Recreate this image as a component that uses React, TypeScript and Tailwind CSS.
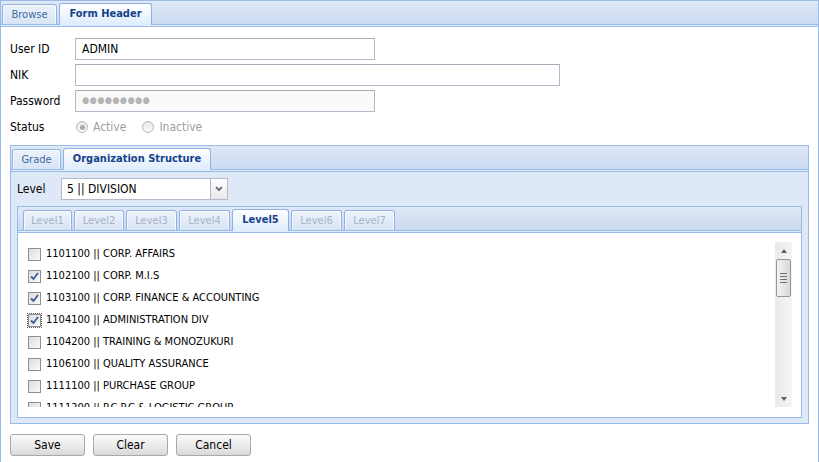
import React from "react";

type TabProps = { label: string; active?: boolean; disabled?: boolean; width: string };

function Tab({ label, active, disabled, width }: TabProps) {
    if (active) {
        return (
            <div
                className={`${width} relative -mb-px flex h-[22px] items-center justify-center rounded-t-[3px] border border-b-0 border-[#8db2e3] bg-gradient-to-b from-white to-[#deecfd] text-[11px] font-bold text-[#15428b]`}
            >
                {label}
            </div>
        );
    }
    return (
        <div
            className={`${width} flex h-[20px] items-center justify-center rounded-t-[3px] border border-b-0 border-[#8db2e3] bg-gradient-to-b from-[#eef3fb] to-[#d7e4f5] text-[11px] ${disabled ? "text-[#a8b4c6]" : "text-[#416aa3]"}`}
        >
            <span className="flex h-full w-full items-center justify-center border-x border-t border-white/70 rounded-t-[2px]">{label}</span>
        </div>
    );
}

function TabStrip({ children, className = "" }: { children: React.ReactNode; className?: string }) {
    return (
        <div className={className}>
            <div className="flex h-[24px] items-end gap-[2px] border-b border-[#99bbe8] bg-gradient-to-b from-[#dfe8f6] to-[#cbdaf0] pl-[1px]">
                {children}
            </div>
            <div className="h-[2px] border-b border-[#99bbe8] bg-[#deecfd]" />
        </div>
    );
}

function TextField({ value, width, disabled }: { value?: string; width: string; disabled?: boolean }) {
    return (
        <div
            className={`${width} flex h-[22px] items-center border border-[#b5b8c8] border-t-[#a8abb8] px-[6px] ${disabled ? "bg-[#fafafa] text-[9px] tracking-[0.5px] text-[#b4b4b4]" : "bg-white text-[12px] text-black"}`}
        >
            {value}
        </div>
    );
}

function Radio({ checked, label }: { checked?: boolean; label: string }) {
    return (
        <div className="flex items-center gap-[5px] text-[12px] text-[#a0a0a0]">
            <div className="flex h-[12px] w-[12px] items-center justify-center rounded-full border border-[#b8b8b8] bg-gradient-to-b from-[#e8e8e8] to-[#fbfbfb]">
                {checked && <div className="h-[5px] w-[5px] rounded-full bg-[#a8a8a8]" />}
            </div>
            {label}
        </div>
    );
}

function Checkbox({ checked, focused }: { checked?: boolean; focused?: boolean }) {
    return (
        <div className={`flex h-[15px] w-[15px] items-center justify-center ${focused ? "outline outline-1 outline-dotted outline-[#555] -outline-offset-1" : ""}`}>
            <div className="flex h-[13px] w-[13px] items-center justify-center border border-[#8f8f8f] bg-gradient-to-br from-[#dcdcdc] to-[#fafafa]">
                {checked && (
                    <svg width="9" height="9" viewBox="0 0 9 9">
                        <path d="M1 4.5 L3.5 7 L8 1" fill="none" stroke="#3c5a99" strokeWidth="1.8" />
                    </svg>
                )}
            </div>
        </div>
    );
}

const units = [
    { code: "1101100", name: "CORP. AFFAIRS" },
    { code: "1102100", name: "CORP. M.I.S", checked: true },
    { code: "1103100", name: "CORP. FINANCE & ACCOUNTING", checked: true },
    { code: "1104100", name: "ADMINISTRATION DIV", checked: true, focused: true },
    { code: "1104200", name: "TRAINING & MONOZUKURI" },
    { code: "1106100", name: "QUALITY ASSURANCE" },
    { code: "1111100", name: "PURCHASE GROUP" },
    { code: "1111200", name: "P.C.P.C & LOGISTIC GROUP" },
];

function Scrollbar() {
    return (
        <div className="flex h-full w-[17px] flex-col items-center bg-gradient-to-r from-[#e9e9e9] to-[#f5f5f5]">
            <div className="flex h-[17px] items-center justify-center">
                <div className="h-0 w-0 border-x-[3px] border-b-[4px] border-x-transparent border-b-[#606060]" />
            </div>
            <div className="flex h-[38px] w-[15px] flex-col items-center justify-center gap-[2px] rounded-[2px] border border-[#979797] bg-gradient-to-r from-[#f3f3f3] to-[#d8d8d8]">
                <div className="h-px w-[7px] bg-[#707070]" />
                <div className="h-px w-[7px] bg-[#707070]" />
                <div className="h-px w-[7px] bg-[#707070]" />
                <div className="h-px w-[7px] bg-[#707070]" />
            </div>
            <div className="flex-1" />
            <div className="flex h-[17px] items-center justify-center">
                <div className="h-0 w-0 border-x-[3px] border-t-[4px] border-x-transparent border-t-[#606060]" />
            </div>
        </div>
    );
}

function Button({ label }: { label: string }) {
    return (
        <div className="flex h-[22px] w-[75px] items-center justify-center rounded-[3px] border border-[#a9a9a9] bg-gradient-to-b from-[#fbfbfb] via-[#ececec] to-[#d9d9d9] text-[12px] text-black">
            {label}
        </div>
    );
}

export default function App() {
    return (
        <div className="flex h-[462px] w-[819px] flex-col overflow-hidden border-x border-t border-[#99bbe8] bg-white font-['DejaVu_Sans_Condensed','Liberation_Sans',sans-serif] text-black">
            <TabStrip>
                <Tab label="Browse" width="w-[55px]" />
                <Tab label="Form Header" width="w-[93px]" active />
            </TabStrip>

            <div className="flex flex-col px-[9px] pt-[11px]">
                <div className="flex flex-col gap-[4px]">
                    <div className="flex h-[22px] items-center">
                        <span className="w-[65px] text-[12px]">User ID</span>
                        <TextField value="ADMIN" width="w-[300px]" />
                    </div>
                    <div className="flex h-[22px] items-center">
                        <span className="w-[65px] text-[12px]">NIK</span>
                        <TextField width="w-[485px]" />
                    </div>
                    <div className="flex h-[22px] items-center">
                        <span className="w-[65px] text-[12px]">Password</span>
                        <TextField value="●●●●●●●●●" width="w-[300px]" disabled />
                    </div>
                    <div className="flex h-[22px] items-center">
                        <span className="w-[66px] text-[12px]">Status</span>
                        <div className="flex items-center gap-[16px]">
                            <Radio label="Active" checked />
                            <Radio label="Inactive" />
                        </div>
                    </div>
                </div>

                <div className="mt-[7px] flex flex-col">
                    <TabStrip className="border-x border-t border-[#99bbe8]">
                        <Tab label="Grade" width="w-[49px]" />
                        <Tab label="Organization Structure" width="w-[148px]" active />
                    </TabStrip>
                    <div className="flex flex-col border-x border-b border-[#99bbe8] bg-[#dfe8f6] px-[6px] pb-[5px] pt-[6px]">
                        <div className="flex h-[22px] items-center">
                            <span className="w-[44px] text-[12px]">Level</span>
                            <div className="flex h-[22px] w-[167px] border border-[#b5b8c8] bg-white">
                                <div className="flex flex-1 items-center px-[5px] text-[12px]">5 || DIVISION</div>
                                <div className="flex w-[17px] items-center justify-center border-l border-[#b5b8c8] bg-gradient-to-b from-white to-[#e8e8e8]">
                                    <svg width="8" height="6" viewBox="0 0 8 6">
                                        <path d="M1 1 L4 4 L7 1" fill="none" stroke="#4d5a6e" strokeWidth="1.6" />
                                    </svg>
                                </div>
                            </div>
                        </div>

                        <div className="mt-[6px] flex flex-col">
                            <TabStrip className="border-x border-t border-[#99bbe8]">
                                <div className="w-[2px]" />
                                <Tab label="Level1" width="w-[49px]" disabled />
                                <Tab label="Level2" width="w-[50px]" disabled />
                                <Tab label="Level3" width="w-[51px]" disabled />
                                <Tab label="Level4" width="w-[51px]" disabled />
                                <Tab label="Level5" width="w-[57px]" active />
                                <Tab label="Level6" width="w-[51px]" disabled />
                                <Tab label="Level7" width="w-[51px]" disabled />
                            </TabStrip>
                            <div className="border-x border-b border-[#99bbe8] bg-white px-[9px] pb-[10px] pt-[9px]">
                                <div className="flex h-[165px] overflow-hidden">
                                    <div className="flex flex-1 flex-col overflow-hidden pt-[1px]">
                                        {units.map((u) => (
                                            <div key={u.code} className="flex h-[22px] shrink-0 items-center gap-[4px] text-[11px]">
                                                <Checkbox checked={u.checked} focused={u.focused} />
                                                <span>
                                                    {u.code} || {u.name}
                                                </span>
                                            </div>
                                        ))}
                                    </div>
                                    <Scrollbar />
                                </div>
                            </div>
                        </div>
                    </div>
                </div>

                <div className="mt-[10px] flex gap-[8px]">
                    <Button label="Save" />
                    <Button label="Clear" />
                    <Button label="Cancel" />
                </div>
            </div>
        </div>
    );
}
